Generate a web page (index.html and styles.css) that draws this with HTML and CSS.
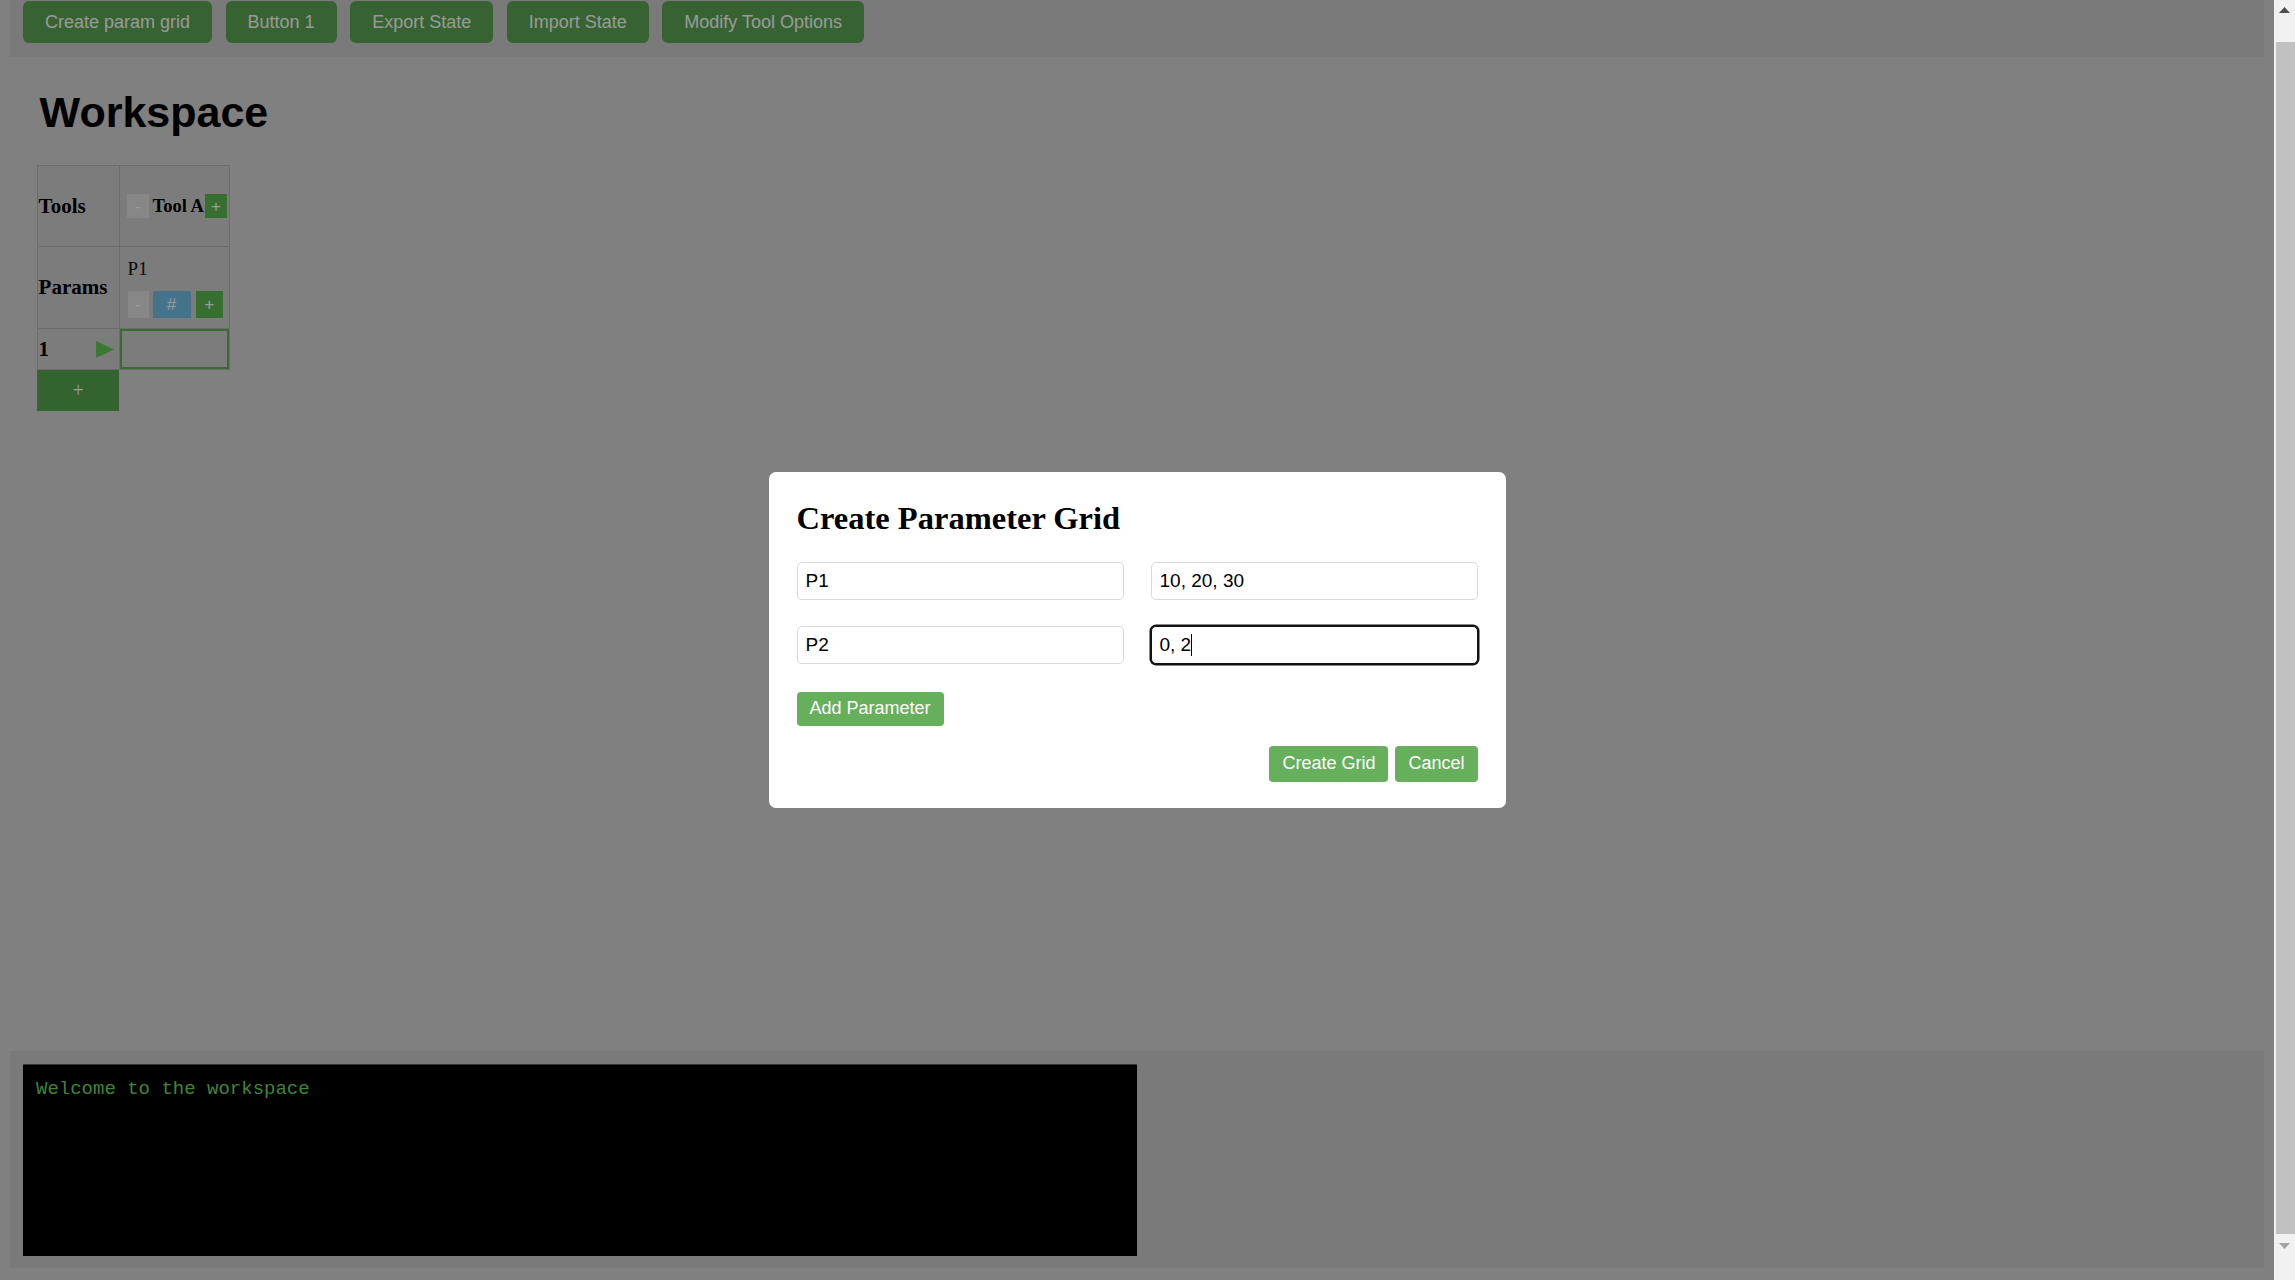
FILE: index.html
```html
<!DOCTYPE html>
<html lang="en">
<head>
<meta charset="utf-8">
<title>Workspace</title>
<link rel="stylesheet" href="styles.css">
</head>
<body>
<div class="toolbar">
  <button class="btn">Create param grid</button>
  <button class="btn">Button 1</button>
  <button class="btn">Export State</button>
  <button class="btn">Import State</button>
  <button class="btn">Modify Tool Options</button>
</div>

<main class="workspace">
  <h1 class="ws-title">Workspace</h1>
  <table class="grid">
    <colgroup><col class="col-head"><col class="col-tool"></colgroup>
    <tr class="row-tools">
      <th class="row-head">Tools</th>
      <td class="tool-cell">
        <div class="tool-head">
          <button class="mini mini-minus">-</button>
          <span class="tool-name">Tool A</span>
          <button class="mini mini-plus">+</button>
        </div>
      </td>
    </tr>
    <tr class="row-params">
      <th class="row-head">Params</th>
      <td class="param-cell">
        <div class="param-name">P1</div>
        <div class="param-actions">
          <button class="mini mini-minus tall">-</button>
          <button class="mini mini-hash">#</button>
          <button class="mini mini-plus tall wide">+</button>
        </div>
      </td>
    </tr>
    <tr class="row-run">
      <th class="row-head">
        <div class="run">
          <span class="run-num">1</span>
          <svg class="run-icon" width="18" height="17" viewBox="0 0 18 17"><polygon points="0,0 18,8.5 0,17"/></svg>
        </div>
      </th>
      <td class="value-cell"><input class="value-input" type="text"></td>
    </tr>
    <tr class="row-add">
      <td class="add-cell"><button class="add-row">+</button></td>
    </tr>
  </table>
</main>

<section class="console-panel">
  <div class="console">Welcome to the workspace</div>
</section>

<div class="overlay">
  <div class="modal">
    <h2 class="modal-title">Create Parameter Grid</h2>
    <div class="param-rows">
      <div class="param-row">
        <input class="field" type="text" value="P1">
        <input class="field" type="text" value="10, 20, 30">
      </div>
      <div class="param-row">
        <input class="field" type="text" value="P2">
        <div class="caret-wrap"><input class="field field-focus" type="text" value="0, 2"></div>
      </div>
    </div>
    <button class="mbtn add-param">Add Parameter</button>
    <div class="modal-actions">
      <button class="mbtn">Create Grid</button>
      <button class="mbtn">Cancel</button>
    </div>
  </div>
</div>

<div class="scrollbar" aria-hidden="true">
  <div class="sb-btn sb-up">
    <svg width="11" height="6" viewBox="0 0 11 6"><polygon points="5.5,0 11,6 0,6"/></svg>
  </div>
  <div class="sb-track"><div class="sb-thumb"></div></div>
  <div class="sb-btn sb-down">
    <svg width="11" height="6" viewBox="0 0 11 6"><polygon points="0,0 11,0 5.5,6"/></svg>
  </div>
</div>
</body>
</html>
```

FILE: styles.css
```css
html {
  overflow: hidden;
  background: #d5d5d5;
}

body {
  margin: 0 31px 16px 10px;
  font-family: "Liberation Serif", serif;
  background: #d5d5d5;
}

/* toolbar */
.toolbar {
  display: flex;
  gap: 13.5px;
  padding: 1px 13px 14px;
  background: #cbcbcb;
}

.btn {
  height: 42px;
  padding: 0 22px;
  border: 0;
  border-radius: 6px;
  background: #5aa652;
  color: #fff;
  font-family: "Liberation Sans", Arial, sans-serif;
  font-size: 18px;
  white-space: nowrap;
}

/* workspace */
.workspace {
  height: 994px;
  box-sizing: border-box;
  padding: 31px 26.6px 0;
}

.ws-title {
  margin: 0 0 28px;
  padding-left: 3px;
  font-family: "Liberation Sans", Arial, sans-serif;
  font-size: 43px;
  font-weight: bold;
  line-height: normal;
  color: #000;
}

.grid {
  border-collapse: collapse;
  table-layout: fixed;
  width: 192px;
}

.col-head { width: 82px; }
.col-tool { width: 110px; }

.grid th,
.grid td {
  border: 1px solid #b4b4b4;
  background: #cfcfcf;
  padding: 0;
  vertical-align: middle;
  overflow: hidden;
}

.row-head {
  text-align: left;
  padding-left: 1px !important;
  font-size: 21px;
  font-weight: bold;
  color: #000;
}

.row-tools th, .row-tools td { height: 80px; }
.row-params th, .row-params td { height: 81px; }
.row-run th, .row-run td { height: 40px; }

.tool-head {
  display: flex;
  align-items: center;
  padding-left: 7px;
  white-space: nowrap;
}

.tool-name {
  margin: 0 1px 0 4px;
  font-size: 18.5px;
  font-weight: bold;
  color: #000;
}

.mini {
  flex: none;
  width: 22px;
  height: 24px;
  padding: 0;
  border: 0;
  color: #fff;
  font-family: "Liberation Sans", Arial, sans-serif;
  font-size: 17px;
  line-height: 1;
}

.mini.tall { height: 27px; width: 21px; }
.mini.wide { width: 27px; }

.mini-minus { background: #e2e2e2; }
.mini-plus { background: #5cba52; }
.mini-hash {
  width: 38px;
  height: 27px;
  background: #73c0ea;
}

.param-cell {
  padding-left: 8px !important;
}

.param-name {
  font-size: 19px;
  line-height: 22px;
  color: #111;
  margin-bottom: 11px;
}

.param-actions {
  display: flex;
  gap: 4px;
}
.param-actions .mini-plus { margin-left: 1px; }

.run {
  display: flex;
  align-items: center;
  justify-content: space-between;
  padding-right: 5px;
}

.run-icon { fill: #62c855; }

.value-cell { padding: 0 !important; }

.value-input {
  display: block;
  width: 100%;
  height: 40px;
  box-sizing: border-box;
  margin: 0;
  border: 2px solid #5fb552;
  background: transparent;
  outline: none;
}

.grid td.add-cell {
  border: 0;
  padding: 0;
  height: 41px;
}

.add-row {
  display: block;
  width: 100%;
  height: 41px;
  border: 0;
  padding: 0;
  background: #55a64d;
  color: #fff;
  font-family: "Liberation Serif", serif;
  font-size: 20px;
}

/* console */
.console-panel {
  padding: 13px 13px 12px;
  background: #cbcbcb;
}

.console {
  width: 50%;
  height: 192px;
  box-sizing: border-box;
  padding: 13px;
  background: #000;
  border-top: 1px solid #5a5a5a;
  color: #6ed95d;
  font-family: "Liberation Mono", monospace;
  font-size: 19px;
  line-height: normal;
}

/* modal */
.overlay {
  position: fixed;
  top: 0;
  bottom: 0;
  left: 0;
  right: 21px;
  display: flex;
  align-items: center;
  justify-content: center;
  background: rgba(0, 0, 0, 0.4);
}

.modal {
  width: 737px;
  box-sizing: border-box;
  padding: 28px 28px 26px;
  background: #fff;
  border-radius: 7px;
}

.modal-title {
  margin: 0;
  font-family: "Liberation Serif", serif;
  font-size: 32.5px;
  font-weight: bold;
  line-height: normal;
  color: #000;
}

.param-rows {
  display: flex;
  flex-direction: column;
  gap: 26px;
  margin-top: 24.6px;
}

.param-row {
  display: grid;
  grid-template-columns: 1fr 1fr;
  gap: 27px;
}

.field {
  display: block;
  width: 100%;
  height: 38px;
  box-sizing: border-box;
  margin: 0;
  padding: 0 8px;
  border: 1px solid #d9d9d9;
  border-radius: 5px;
  background: #fff;
  color: #000;
  font-family: "Liberation Sans", Arial, sans-serif;
  font-size: 19px;
  outline: none;
}

.field-focus {
  border-color: #111;
  box-shadow: 0 0 0 1.5px #111;
}

.caret-wrap {
  position: relative;
}
.caret-wrap::after {
  content: "";
  position: absolute;
  left: 40px;
  top: 8px;
  width: 1.5px;
  height: 22px;
  background: #000;
}

.mbtn {
  height: 36px;
  padding: 0 13px;
  border: 0;
  border-radius: 4px;
  background: #66b05c;
  color: #fff;
  font-family: "Liberation Sans", Arial, sans-serif;
  font-size: 18px;
  white-space: nowrap;
}

.add-param {
  display: block;
  height: 34px;
  margin-top: 28px;
}

.modal-actions {
  display: flex;
  justify-content: flex-end;
  gap: 7px;
  margin-top: 20px;
}

/* page scrollbar */
.scrollbar {
  position: fixed;
  top: 0;
  right: 0;
  bottom: 0;
  width: 21px;
  display: flex;
  flex-direction: column;
  background: #f1f1f1;
}

.sb-btn {
  flex: none;
  height: 42px;
  display: flex;
  justify-content: center;
}

.sb-up { align-items: flex-start; padding-top: 7px; box-sizing: border-box; }
.sb-up svg { fill: #505050; }
.sb-down { align-items: flex-start; padding-top: 5px; box-sizing: border-box; }
.sb-down svg { fill: #a3a3a3; }

.sb-track {
  flex: 1;
  display: flex;
  padding: 0 0 4px 2px;
}

.sb-thumb {
  flex: 1;
  background: #c1c1c1;
}
```
